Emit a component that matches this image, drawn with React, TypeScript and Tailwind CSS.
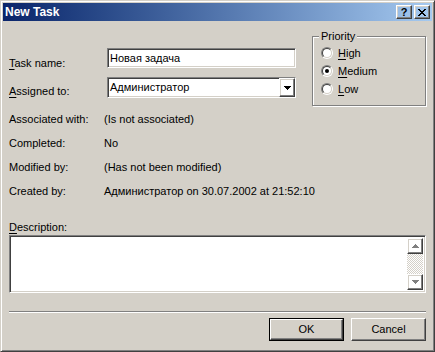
import React from "react";

const sunken =
  "border border-t-[#808080] border-l-[#808080] border-r-white border-b-white shadow-[inset_1px_1px_0_#404040,inset_-1px_-1px_0_#d4d0c8]";
const raised =
  "border border-t-white border-l-white border-r-[#404040] border-b-[#404040] shadow-[inset_-1px_-1px_0_#808080,inset_1px_1px_0_#d4d0c8]";

function U({ children }: { children: React.ReactNode }) {
  return <span className="underline underline-offset-[2px]">{children}</span>;
}

function Radio({ checked, children }: { checked?: boolean; children: React.ReactNode }) {
  return (
    <div className="flex h-[18px] items-center gap-[5px]">
      <div className="flex h-[12px] w-[12px] shrink-0 rounded-full border border-t-[#808080] border-l-[#808080] border-r-white border-b-white">
        <div className="flex flex-1 items-center justify-center rounded-full border border-t-[#404040] border-l-[#404040] border-r-[#d4d0c8] border-b-[#d4d0c8] bg-white">
          {checked && <div className="h-[4px] w-[4px] rounded-full bg-black" />}
        </div>
      </div>
      <span>{children}</span>
    </div>
  );
}

function Btn({ children, def }: { children: React.ReactNode; def?: boolean }) {
  if (def) {
    return (
      <div className="h-[23px] w-[75px] border border-black">
        <div className={`${raised} flex h-full w-full items-center justify-center`}>{children}</div>
      </div>
    );
  }
  return <div className={`${raised} flex h-[23px] w-[75px] items-center justify-center`}>{children}</div>;
}

export default function App() {
  return (
    <div className="h-[352px] w-[435px] border border-t-[#d4d0c8] border-l-[#d4d0c8] border-r-[#404040] border-b-[#404040] bg-[#d4d0c8] p-[2px] font-['Liberation_Sans',Arial,sans-serif] text-[11px] leading-[13px] text-black shadow-[inset_1px_1px_0_#ffffff,inset_-1px_-1px_0_#808080]">
      <div className="flex h-[18px] items-center justify-between bg-linear-to-r from-[#0a246a] to-[#a6caf0] pl-[2px] pr-[2px]">
        <span className="text-[12px] font-bold text-white">New Task</span>
        <div className="flex gap-[2px]">
          <div className={`${raised} flex h-[14px] w-[16px] items-center justify-center`}>
            <span className="text-[11px] font-bold leading-[11px]">?</span>
          </div>
          <div className={`${raised} flex h-[14px] w-[16px] items-center justify-center`}>
            <svg width="8" height="7" viewBox="0 0 8 7">
              <path d="M0 0h2v1h1v1h2v-1h1v-1h2v1h-1v1h-1v1h-1v1h1v1h1v1h1v1h-2v-1h-1v-1h-2v1h-1v1h-2v-1h1v-1h1v-1h1v-1h-1v-1h-1v-1h-1z" fill="#000" />
            </svg>
          </div>
        </div>
      </div>

      <div className="px-[6px]">
        <div className="flex items-start justify-between">
          <div className="mt-[27px] flex flex-col">
            <div className="flex h-[29px] items-start">
              <div className="w-[98px] pt-[9px]">
                <U>T</U>ask name:
              </div>
              <div className={`${sunken} flex h-[20px] w-[189px] items-center bg-white pl-[2px]`}>Новая задача</div>
            </div>
            <div className="flex items-start">
              <div className="w-[98px] pt-[8px]">
                <U>A</U>ssigned to:
              </div>
              <div className={`${sunken} flex h-[21px] w-[189px] items-stretch bg-white`}>
                <div className="flex flex-1 items-center pl-[2px]">Администратор</div>
                <div className={`${raised} flex w-[16px] items-center justify-center`}>
                  <svg width="7" height="4" viewBox="0 0 7 4">
                    <path d="M0 0h7v1h-1v1h-1v1h-1v1h-1v-1h-1v-1h-1v-1h-1z" fill="#000" />
                  </svg>
                </div>
              </div>
            </div>
          </div>

          <fieldset className="mt-[9px] h-[76px] w-[114px] border border-[#808080] shadow-[inset_1px_1px_0_#ffffff,1px_1px_0_#ffffff]">
            <legend className="ml-[6px] bg-[#d4d0c8] px-[2px]">Priority</legend>
            <div className="mt-[1px] flex flex-col pl-[8px]">
              <Radio>
                <U>H</U>igh
              </Radio>
              <Radio checked>
                <U>M</U>edium
              </Radio>
              <Radio>
                <U>L</U>ow
              </Radio>
            </div>
          </fieldset>
        </div>

        <div className="mt-[7px] flex flex-col gap-[11px]">
          <div className="flex">
            <div className="w-[95px]">Associated with:</div>
            <div>(Is not associated)</div>
          </div>
          <div className="flex">
            <div className="w-[95px]">Completed:</div>
            <div>No</div>
          </div>
          <div className="flex">
            <div className="w-[95px]">Modified by:</div>
            <div>(Has not been modified)</div>
          </div>
          <div className="flex">
            <div className="w-[95px]">Created by:</div>
            <div>Администратор on 30.07.2002 at 21:52:10</div>
          </div>
        </div>

        <div className="mt-[23px]">
          <U>D</U>escription:
        </div>
        <div className={`${sunken} mt-[1px] flex h-[58px] w-full bg-white p-[2px]`}>
          <div className="flex-1" />
          <div className="flex w-[16px] flex-col">
            <div className={`${raised} flex h-[16px] items-center justify-center`}>
              <svg width="7" height="4" viewBox="0 0 7 4">
                <path d="M3 0h1v1h1v1h1v1h1v1h-7v-1h1v-1h1v-1h1z" fill="#808080" />
              </svg>
            </div>
            <div className="flex-1 bg-[repeating-conic-gradient(#d4d0c8_0_25%,#ffffff_0_50%)] bg-[length:2px_2px]" />
            <div className={`${raised} flex h-[16px] items-center justify-center`}>
              <svg width="7" height="4" viewBox="0 0 7 4">
                <path d="M0 0h7v1h-1v1h-1v1h-1v1h-1v-1h-1v-1h-1v-1h-1z" fill="#808080" />
              </svg>
            </div>
          </div>
        </div>

        <div className="mt-[18px] h-[2px] border-t border-b border-t-[#808080] border-b-white" />

        <div className="mt-[5px] flex justify-end gap-[7px]">
          <Btn def>OK</Btn>
          <Btn>Cancel</Btn>
        </div>
      </div>
    </div>
  );
}
